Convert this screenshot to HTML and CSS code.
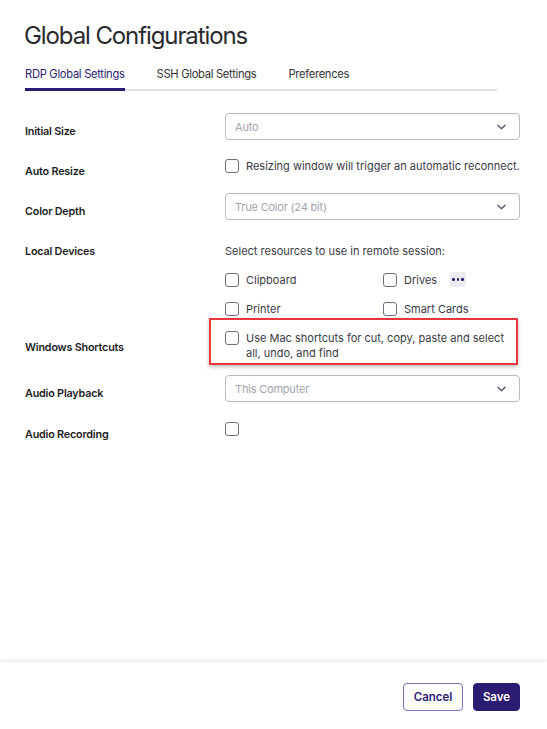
FILE: index.html
```html
<!DOCTYPE html>
<html lang="en">
<head>
    <meta charset="UTF-8">
    <meta name="viewport" content="width=device-width, initial-scale=1.0">
    <title>Global Configurations</title>
    <link rel="stylesheet" href="styles.css">
</head>
<body>
    <div class="page">
        <div class="content">
            <h1>Global Configurations</h1>

            <div class="tabs">
                <span class="tab active">RDP Global Settings</span>
                <span class="tab">SSH Global Settings</span>
                <span class="tab">Preferences</span>
            </div>

            <div class="form">
                <div class="row">
                    <div class="label">Initial Size</div>
                    <div class="select">
                        <span>Auto</span>
                        <svg class="chevron" viewBox="0 0 10 6"><path d="M1 1l4 4 4-4"/></svg>
                    </div>
                </div>

                <div class="row">
                    <div class="label">Auto Resize</div>
                    <div class="control">
                        <label class="check"><span class="box"></span>Resizing window will trigger an automatic reconnect.</label>
                    </div>
                </div>

                <div class="row">
                    <div class="label">Color Depth</div>
                    <div class="select">
                        <span>True Color (24 bit)</span>
                        <svg class="chevron" viewBox="0 0 10 6"><path d="M1 1l4 4 4-4"/></svg>
                    </div>
                </div>

                <div class="row">
                    <div class="label">Local Devices</div>
                    <div class="control">
                        <div class="hint">Select resources to use in remote session:</div>
                        <div class="devices">
                            <label class="check"><span class="box"></span>Clipboard</label>
                            <label class="check"><span class="box"></span>Drives <span class="more"><i></i><i></i><i></i></span></label>
                            <label class="check"><span class="box"></span>Printer</label>
                            <label class="check"><span class="box"></span>Smart Cards</label>
                        </div>
                    </div>
                </div>

                <div class="row tight">
                    <div class="label label-low">Windows Shortcuts</div>
                    <div class="marked">
                        <label class="check wrap"><span class="box"></span>Use Mac shortcuts for cut, copy, paste and select all, undo, and find</label>
                    </div>
                </div>

                <div class="row playback">
                    <div class="label">Audio Playback</div>
                    <div class="select">
                        <span>This Computer</span>
                        <svg class="chevron" viewBox="0 0 10 6"><path d="M1 1l4 4 4-4"/></svg>
                    </div>
                </div>

                <div class="row recording">
                    <div class="label">Audio Recording</div>
                    <div class="control">
                        <label class="check"><span class="box"></span></label>
                    </div>
                </div>
            </div>
        </div>

        <div class="footer">
            <button class="btn btn-outline">Cancel</button>
            <button class="btn btn-primary">Save</button>
        </div>
    </div>
</body>
</html>
```

FILE: styles.css
```css
:root {
    --brand: #2b1b73;
    --text: #1f1f29;
    --muted: #a3a3ae;
    --border: #b9b9c4;
}

* {
    box-sizing: border-box;
}

body {
    margin: 0;
    font-family: Inter, "Noto Sans", sans-serif;
    color: var(--text);
    background: #fff;
}

.page {
    height: 100vh;
    display: flex;
    flex-direction: column;
}

.content {
    flex: 1;
    padding: 21px 27px 0 25px;
}

h1 {
    margin: 0 0 0 -1px;
    font-size: 24px;
    line-height: 30px;
    font-weight: 400;
    letter-spacing: -1.1px;
    color: #2a2a2e;
}

.tabs {
    display: flex;
    gap: 32px;
    width: 472px;
    margin-top: 15px;
    box-shadow: inset 0 -2px 0 #e1e1e7;
}

.tab {
    font-size: 11.2px;
    line-height: 16px;
    letter-spacing: -0.3px;
    color: #333;
    padding-bottom: 6px;
    border-bottom: 3px solid transparent;
}

.tab.active {
    color: var(--brand);
    border-bottom-color: var(--brand);
}

.form {
    margin-top: 22px;
}

.row {
    display: flex;
    align-items: flex-start;
    min-height: 27px;
}

.row + .row {
    margin-top: 13px;
}

.row.tight {
    margin-top: 2px;
}

.row.playback {
    margin-top: 10px;
}

.row.recording {
    margin-top: 14px;
}

.label {
    width: 200px;
    flex: none;
    padding-top: 12px;
    font-size: 10.8px;
    line-height: 14px;
    font-weight: 600;
    letter-spacing: -0.2px;
    color: #1d1d26;
}

.label-low {
    padding-top: 23px;
}

.select {
    width: 295px;
    height: 27px;
    border: 1px solid var(--border);
    border-radius: 4px;
    display: flex;
    align-items: center;
    justify-content: space-between;
    padding: 0 13px 0 9px;
    font-size: 11px;
    color: var(--muted);
    letter-spacing: -0.2px;
}

.chevron {
    width: 9px;
    height: 6px;
    fill: none;
    stroke: #55556a;
    stroke-width: 1.5;
    stroke-linecap: round;
    stroke-linejoin: round;
}

.control {
    width: 295px;
    padding-top: 6px;
}

.check {
    display: flex;
    align-items: center;
    gap: 7px;
    font-size: 11px;
    line-height: 14px;
    letter-spacing: 0;
    color: #3a3a46;
    white-space: nowrap;
}

.box {
    width: 14px;
    height: 14px;
    flex: none;
    border: 1.5px solid #6e6e7c;
    border-radius: 3px;
}

.hint {
    padding-top: 5px;
    font-size: 11px;
    line-height: 14px;
    letter-spacing: 0;
    color: #3a3a46;
}

.devices {
    display: grid;
    grid-template-columns: 158px 1fr;
    row-gap: 15px;
    margin-top: 14px;
}

.more {
    display: inline-flex;
    align-items: center;
    justify-content: center;
    gap: 2px;
    width: 16px;
    height: 15px;
    margin-left: 6px;
    border-radius: 3px;
    background: #ebebf2;
}

.more i {
    width: 2.5px;
    height: 2.5px;
    border-radius: 50%;
    background: var(--brand);
}

.marked {
    width: 309px;
    margin-left: -16px;
    padding: 11px 10px 2px 14px;
    border: 2px solid #e8383d;
    box-shadow: 0 2px 4px rgba(0, 0, 0, 0.25);
}

.check.wrap {
    align-items: flex-start;
    line-height: 15px;
    white-space: normal;
}

.footer {
    display: flex;
    justify-content: flex-end;
    gap: 10px;
    padding: 21px 27px 18px;
    box-shadow: 0 -2px 4px rgba(0, 0, 0, 0.08);
}

.btn {
    height: 28px;
    border-radius: 4px;
    font-family: inherit;
    font-size: 11.5px;
    font-weight: 600;
    padding: 0;
}

.btn-outline {
    width: 60px;
    background: #fff;
    color: var(--brand);
    border: 1.5px solid #7b6fb5;
}

.btn-primary {
    width: 47px;
    background: var(--brand);
    color: #fff;
    border: 1px solid var(--brand);
}
```
